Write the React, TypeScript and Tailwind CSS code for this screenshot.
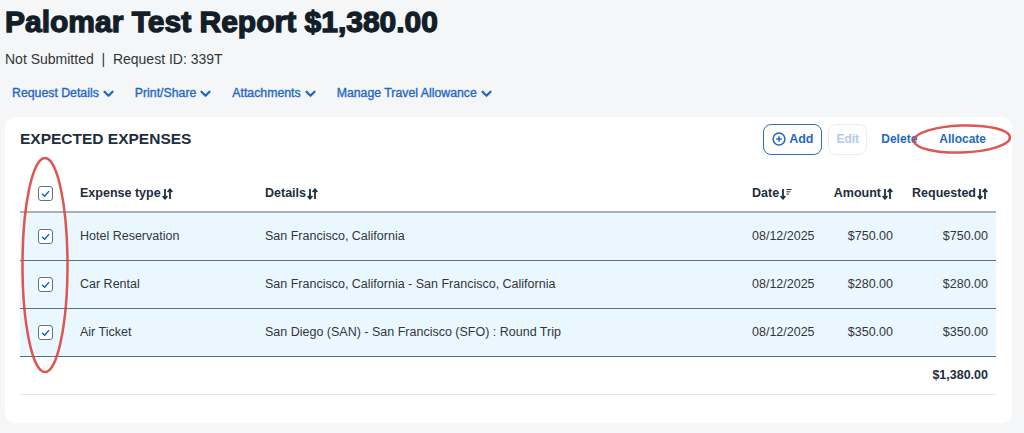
import React from "react";

type Row = {
  type: string;
  details: string;
  date: string;
  amount: string;
  requested: string;
};

const rows: Row[] = [
  { type: "Hotel Reservation", details: "San Francisco, California", date: "08/12/2025", amount: "$750.00", requested: "$750.00" },
  { type: "Car Rental", details: "San Francisco, California - San Francisco, California", date: "08/12/2025", amount: "$280.00", requested: "$280.00" },
  { type: "Air Ticket", details: "San Diego (SAN) - San Francisco (SFO) : Round Trip", date: "08/12/2025", amount: "$350.00", requested: "$350.00" },
];

const cols = "grid grid-cols-[50px_185px_1fr_78px_83px_93px]";

function Chevron() {
  return (
    <svg width="11" height="8" viewBox="0 0 11 8" className="mt-[1px]">
      <path d="M1.5 1.8 L5.5 5.8 L9.5 1.8" fill="none" stroke="currentColor" strokeWidth="2.3" strokeLinecap="round" strokeLinejoin="round" />
    </svg>
  );
}

function SortIcon() {
  return (
    <svg width="11" height="12" viewBox="0 0 11 12" className="ml-[1px]">
      {/* down arrow */}
      <path d="M3 1 V10.5" stroke="currentColor" strokeWidth="1.8" />
      <path d="M0.6 8 L3 10.8 L5.4 8" fill="none" stroke="currentColor" strokeWidth="1.6" />
      {/* up arrow */}
      <path d="M8 11 V1.5" stroke="currentColor" strokeWidth="1.8" />
      <path d="M5.6 4 L8 1.2 L10.4 4" fill="none" stroke="currentColor" strokeWidth="1.6" />
    </svg>
  );
}

function SortDescIcon() {
  return (
    <svg width="12" height="12" viewBox="0 0 12 12" className="ml-[1px]">
      <path d="M3 1 V10.5" stroke="currentColor" strokeWidth="1.8" />
      <path d="M0.6 8 L3 10.8 L5.4 8" fill="none" stroke="currentColor" strokeWidth="1.6" />
      <path d="M6.5 1.5 H11.5 M6.5 3.8 H10.3 M6.5 6.1 H9" stroke="currentColor" strokeWidth="1" />
    </svg>
  );
}

function Checkbox() {
  return (
    <div className="w-[15px] h-[15px] rounded-[3px] border border-[#5b738b] bg-white flex items-center justify-center">
      <svg width="9" height="8" viewBox="0 0 9 8">
        <path d="M1.5 4.2 L3.6 6.2 L7.6 1.6" fill="none" stroke="#0a5fc4" strokeWidth="1.4" strokeLinecap="round" strokeLinejoin="round" />
      </svg>
    </div>
  );
}

function PlusCircle() {
  return (
    <svg width="14" height="14" viewBox="0 0 14 14">
      <circle cx="7" cy="7" r="5.9" fill="none" stroke="currentColor" strokeWidth="1.5" />
      <path d="M7 4.2 V9.8 M4.2 7 H9.8" stroke="currentColor" strokeWidth="1.5" />
    </svg>
  );
}

export default function App() {
  return (
    <div className="relative w-[1024px] h-[433px] overflow-hidden bg-[#f5f6f7] font-['Liberation_Sans',Arial,sans-serif] text-[#1d2d3e]">
      {/* Header */}
      <h1 className="pl-[5px] pt-[4px] text-[30px] leading-[36px] font-bold [-webkit-text-stroke:1.3px_#131e29] text-[#131e29]">
        Palomar Test Report $1,380.00
      </h1>
      <p className="pl-[5px] mt-[9px] text-[14px] leading-[20px] text-[#32363a]">
        Not Submitted&nbsp;&nbsp;|&nbsp;&nbsp;Request ID: 339T
      </p>

      {/* Nav */}
      <nav className="mt-[14px] pl-[12px] flex items-center gap-[21px] text-[12.3px] leading-[20px] [-webkit-text-stroke:0.35px_#1f68c4] text-[#1f68c4]">
        {["Request Details", "Print/Share", "Attachments", "Manage Travel Allowance"].map((l) => (
          <a key={l} className="inline-flex items-center gap-[4px]">
            {l}
            <Chevron />
          </a>
        ))}
      </nav>

      {/* Card */}
      <section className="mt-[14px] ml-[5px] w-[1007px] h-[306px] rounded-[10px] bg-white pl-[15px] pr-[16px]">
        <div className="pt-[7px] h-[37px] flex items-center justify-between">
          <h2 className="text-[15.5px] font-bold text-[#1d2d3e]">EXPECTED EXPENSES</h2>
          <div className="flex items-center pr-[10px] text-[12px] font-bold">
            <button className="w-[59px] h-[31px] rounded-[8px] border border-[#2f6fb8] bg-white flex items-center justify-center gap-[3px] text-[#1f68c4]">
              <PlusCircle />
              <span className="text-[12.5px]">Add</span>
            </button>
            <button className="ml-[6px] w-[39px] h-[31px] rounded-[8px] border border-[#ececec] bg-white text-[#b4cbe6]">
              Edit
            </button>
            <button className="ml-[14px] text-[#1f68c4]">Delete</button>
            <button className="ml-[22px] text-[#1f68c4]">Allocate</button>
          </div>
        </div>

        {/* Table */}
        <div className="mt-[22px] text-[12.5px]">
          <div className={`${cols} h-[37px] items-center border-b-2 border-[#a9b0b6] font-bold text-[#1d2d3e]`}>
            <div className="flex justify-center">
              <Checkbox />
            </div>
            <div className="pl-[10px] flex items-center">
              Expense type
              <SortIcon />
            </div>
            <div className="pl-[10px] flex items-center">
              Details
              <SortIcon />
            </div>
            <div className="pl-[10px] flex items-center">
              Date
              <SortDescIcon />
            </div>
            <div className="pr-[10px] flex items-center justify-end">
              Amount
              <SortIcon />
            </div>
            <div className="pr-[8px] flex items-center justify-end">
              Requested
              <SortIcon />
            </div>
          </div>

          {rows.map((r) => (
            <div key={r.type} className={`${cols} h-[48px] items-center bg-[#ebf7fe] border-b border-[#53718f] text-[#32363a]`}>
              <div className="flex justify-center">
                <Checkbox />
              </div>
              <div className="pl-[10px]">{r.type}</div>
              <div className="pl-[10px]">{r.details}</div>
              <div className="pl-[10px]">{r.date}</div>
              <div className="pr-[10px] text-right">{r.amount}</div>
              <div className="pr-[8px] text-right">{r.requested}</div>
            </div>
          ))}

          <div className="h-[38px] flex items-center justify-end pr-[8px] border-b border-[#e5e5e5] font-bold text-[#1d2d3e]">
            $1,380.00
          </div>
        </div>
      </section>

      {/* Annotation marks */}
      <svg className="absolute inset-0 pointer-events-none" width="1024" height="433">
        <ellipse cx="45" cy="265" rx="22.5" ry="107" fill="none" stroke="#d8453f" strokeWidth="2.5" opacity="0.9" />
        <ellipse cx="962" cy="139" rx="48" ry="13.5" fill="none" stroke="#d8453f" strokeWidth="2.5" opacity="0.9" transform="rotate(-2 962 139)" />
      </svg>
    </div>
  );
}
